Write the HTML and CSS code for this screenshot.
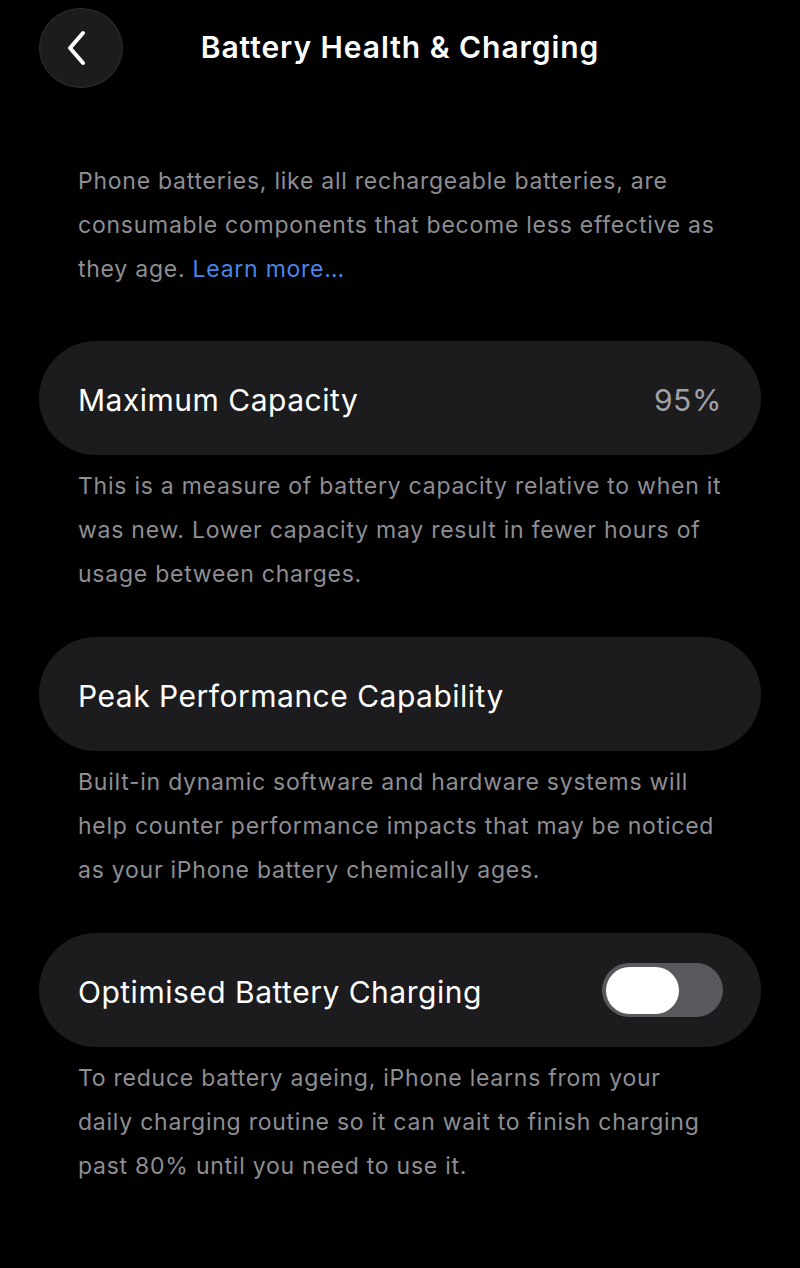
FILE: index.html
```html
<!DOCTYPE html>
<html lang="en">
<head>
<meta charset="utf-8">
<title>Battery Health &amp; Charging</title>
<link rel="stylesheet" href="styles.css">
</head>
<body>
<div class="screen">
  <header class="nav">
    <button class="back" aria-label="Back">
      <svg width="30" height="40" viewBox="0 0 30 40"><path d="M21 5 L8 20 L21 35" fill="none" stroke="#fff" stroke-width="4" stroke-linecap="round" stroke-linejoin="round"/></svg>
    </button>
    <h1 class="title">Battery Health &amp; Charging</h1>
  </header>

  <p class="intro">Phone batteries, like all rechargeable batteries, are<br>consumable components that become less effective as<br>they age. <span class="link">Learn more…</span></p>

  <section class="card">
    <span class="label">Maximum Capacity</span>
    <span class="value">95%</span>
  </section>
  <p class="desc">This is a measure of battery capacity relative to when it<br>was new. Lower capacity may result in fewer hours of<br>usage between charges.</p>

  <section class="card">
    <span class="label">Peak Performance Capability</span>
  </section>
  <p class="desc">Built-in dynamic software and hardware systems will<br>help counter performance impacts that may be noticed<br>as your iPhone battery chemically ages.</p>

  <section class="card">
    <span class="label">Optimised Battery Charging</span>
    <span class="toggle"><span class="knob"></span></span>
  </section>
  <p class="desc">To reduce battery ageing, iPhone learns from your<br>daily charging routine so it can wait to finish charging<br>past 80% until you need to use it.</p>
</div>
</body>
</html>
```

FILE: styles.css
```css
html, body {
  margin: 0;
  padding: 0;
  background: #000;
}
body {
  font-family: Inter, "Noto Sans", "Liberation Sans", sans-serif;
  color: #fff;
  -webkit-font-smoothing: antialiased;
}
.screen {
  width: 800px;
  min-height: 1268px;
  box-sizing: border-box;
  padding: 8px 39px 0 39px;
  display: flex;
  flex-direction: column;
}
.nav {
  display: flex;
  align-items: center;
  height: 80px;
  position: relative;
}
.back {
  width: 84px;
  height: 80px;
  border-radius: 50%;
  background: #1c1c1e;
  border: 1.5px solid #2e2e30;
  display: flex;
  align-items: center;
  justify-content: center;
  padding: 0;
  box-sizing: border-box;
}
.back svg {
  margin-left: -8px;
}
.title {
  position: absolute;
  left: 0;
  right: 0;
  top: 0;
  bottom: 0;
  margin: 0;
  display: flex;
  align-items: center;
  justify-content: center;
  font-size: 30px;
  font-weight: 600;
  letter-spacing: 0.95px;
  pointer-events: none;
  padding-bottom: 3px;
}
.intro, .desc {
  margin: 0;
  padding: 0 0 0 39px;
  font-size: 23px;
  line-height: 44px;
  color: #8e8e93;
  letter-spacing: 0.75px;
  white-space: nowrap;
}
.intro {
  margin-top: 71px;
  margin-bottom: 50px;
}
.link {
  color: #4a86e8;
}
.card {
  height: 114px;
  border-radius: 57px;
  background: #1c1c1e;
  display: flex;
  align-items: center;
  justify-content: space-between;
  padding: 3px 39px 0 39px;
  box-sizing: border-box;
}
.label {
  font-size: 30px;
  color: #fff;
  letter-spacing: 0.5px;
}
.value {
  font-size: 30px;
  color: #a1a1a6;
  letter-spacing: 0.6px;
}
.desc {
  margin-top: 9px;
  margin-bottom: 41px;
}
.toggle {
  width: 121px;
  height: 54px;
  border-radius: 27px;
  background: #59595d;
  display: flex;
  align-items: center;
  padding: 0 4px;
  box-sizing: border-box;
  margin-right: -1px;
  margin-top: -3px;
}
.knob {
  width: 73px;
  height: 47px;
  border-radius: 24px;
  background: #fff;
}
```
